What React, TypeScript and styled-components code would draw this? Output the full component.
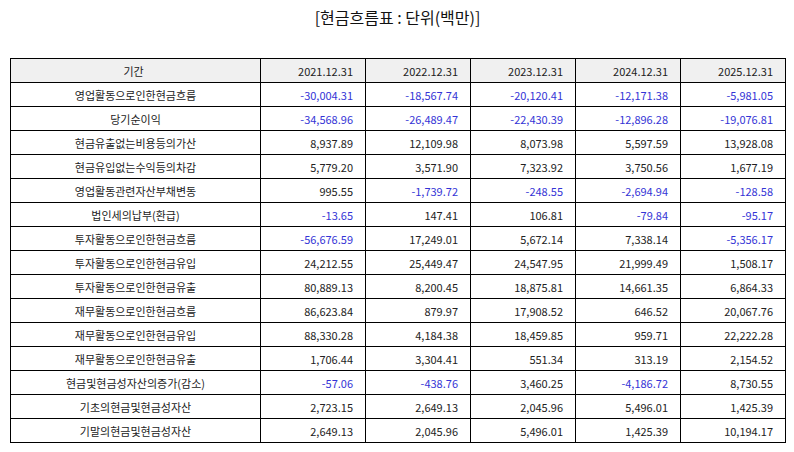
import styled, { createGlobalStyle } from "styled-components";

const GlobalStyle = createGlobalStyle`
    html, body {
        margin: 0;
        padding: 0;
        background: #ffffff;
    }
    body {
        font-family: "Noto Sans CJK KR", "Noto Sans", sans-serif;
        color: #000;
    }
`;

type Row = {
    label: string;
    values: string[];
};

const periods = ["2021.12.31", "2022.12.31", "2023.12.31", "2024.12.31", "2025.12.31"];

const rows: Row[] = [
    { label: "영업활동으로인한현금흐름", values: ["-30,004.31", "-18,567.74", "-20,120.41", "-12,171.38", "-5,981.05"] },
    { label: "당기순이익", values: ["-34,568.96", "-26,489.47", "-22,430.39", "-12,896.28", "-19,076.81"] },
    { label: "현금유출없는비용등의가산", values: ["8,937.89", "12,109.98", "8,073.98", "5,597.59", "13,928.08"] },
    { label: "현금유입없는수익등의차감", values: ["5,779.20", "3,571.90", "7,323.92", "3,750.56", "1,677.19"] },
    { label: "영업활동관련자산부채변동", values: ["995.55", "-1,739.72", "-248.55", "-2,694.94", "-128.58"] },
    { label: "법인세의납부(환급)", values: ["-13.65", "147.41", "106.81", "-79.84", "-95.17"] },
    { label: "투자활동으로인한현금흐름", values: ["-56,676.59", "17,249.01", "5,672.14", "7,338.14", "-5,356.17"] },
    { label: "투자활동으로인한현금유입", values: ["24,212.55", "25,449.47", "24,547.95", "21,999.49", "1,508.17"] },
    { label: "투자활동으로인한현금유출", values: ["80,889.13", "8,200.45", "18,875.81", "14,661.35", "6,864.33"] },
    { label: "재무활동으로인한현금흐름", values: ["86,623.84", "879.97", "17,908.52", "646.52", "20,067.76"] },
    { label: "재무활동으로인한현금유입", values: ["88,330.28", "4,184.38", "18,459.85", "959.71", "22,222.28"] },
    { label: "재무활동으로인한현금유출", values: ["1,706.44", "3,304.41", "551.34", "313.19", "2,154.52"] },
    { label: "현금및현금성자산의증가(감소)", values: ["-57.06", "-438.76", "3,460.25", "-4,186.72", "8,730.55"] },
    { label: "기초의현금및현금성자산", values: ["2,723.15", "2,649.13", "2,045.96", "5,496.01", "1,425.39"] },
    { label: "기말의현금및현금성자산", values: ["2,649.13", "2,045.96", "5,496.01", "1,425.39", "10,194.17"] },
];

const Page = styled.div`
    width: 794px;
    height: 452px;
    padding: 0 9px 0 10px;
    box-sizing: border-box;
    display: flex;
    flex-direction: column;
`;

const Title = styled.h1`
    margin: 0;
    height: 58px;
    padding-top: 5px;
    box-sizing: border-box;
    text-align: center;
    font-size: 16px;
    font-weight: 400;
    line-height: 24px;
    color: #111;
`;

const Table = styled.table`
    width: 775px;
    border-collapse: collapse;
    table-layout: fixed;
    font-size: 11px;
`;

const Col = styled.col<{ $wide?: boolean }>`
    width: ${(p) => (p.$wide ? "250px" : "105px")};
`;

const HeadCell = styled.th<{ $first?: boolean }>`
    height: 23px;
    padding: 0 12px 0 8px;
    border: 1px solid #000;
    background: #f0f0f0;
    font-weight: 400;
    color: #222;
    text-align: ${(p) => (p.$first ? "center" : "right")};
    white-space: nowrap;
`;

const LabelCell = styled.td`
    height: 23px;
    padding: 0 8px;
    border: 1px solid #000;
    text-align: center;
    color: #222;
    white-space: nowrap;
`;

const ValueCell = styled.td<{ $negative: boolean }>`
    height: 23px;
    padding: 0 12px 0 4px;
    border: 1px solid #000;
    text-align: right;
    color: ${(p) => (p.$negative ? "#3434d6" : "#222")};
    white-space: nowrap;
`;

export default function App() {
    return (
        <Page>
            <GlobalStyle />
            <Title>[현금흐름표 : 단위(백만)]</Title>
            <Table>
                <colgroup>
                    <Col $wide />
                    {periods.map((p) => (
                        <Col key={p} />
                    ))}
                </colgroup>
                <thead>
                    <tr>
                        <HeadCell $first>기간</HeadCell>
                        {periods.map((p) => (
                            <HeadCell key={p}>{p}</HeadCell>
                        ))}
                    </tr>
                </thead>
                <tbody>
                    {rows.map((row) => (
                        <tr key={row.label}>
                            <LabelCell>{row.label}</LabelCell>
                            {row.values.map((v, i) => (
                                <ValueCell key={i} $negative={v.startsWith("-")}>
                                    {v}
                                </ValueCell>
                            ))}
                        </tr>
                    ))}
                </tbody>
            </Table>
        </Page>
    );
}
